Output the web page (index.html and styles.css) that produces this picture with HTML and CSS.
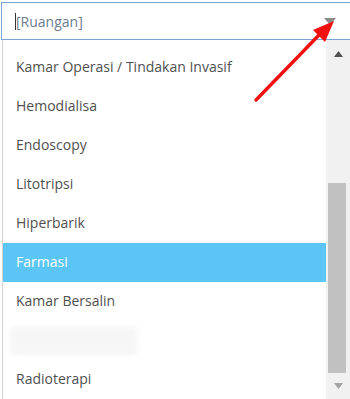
FILE: index.html
```html
<!DOCTYPE html>
<html>
<head>
<meta charset="utf-8">
<link rel="stylesheet" href="styles.css">
</head>
<body>
<div class="page">
  <div class="select">
    <span class="caret"></span><span class="placeholder">[Ruangan]</span>
    <svg class="toggle" width="12" height="8" viewBox="0 0 12 8"><path d="M0 0H12L6 7Z" fill="#8a8a8a"/></svg>
  </div>
  <div class="dropdown">
    <ul class="list">
      <li class="item">Kamar Operasi / Tindakan Invasif</li>
      <li class="item">Hemodialisa</li>
      <li class="item">Endoscopy</li>
      <li class="item">Litotripsi</li>
      <li class="item">Hiperbarik</li>
      <li class="item active">Farmasi</li>
      <li class="item">Kamar Bersalin</li>
      <li class="item"><span class="blur"></span></li>
      <li class="item">Radioterapi</li>
    </ul>
    <div class="scrollbar">
      <svg class="sb-arrow" width="9" height="6" viewBox="0 0 9 6"><path d="M0 6H9L4.5 0Z" fill="#505050"/></svg>
      <div class="thumb"></div>
      <svg class="sb-arrow" width="9" height="6" viewBox="0 0 9 6"><path d="M0 0H9L4.5 6Z" fill="#a3a3a3"/></svg>
    </div>
  </div>
  <svg class="pointer" width="350" height="120" viewBox="0 0 350 120">
    <line x1="256" y1="100" x2="321" y2="33" stroke="#f01010" stroke-width="3.4" stroke-linecap="round"/>
    <path d="M334 21 L313 30 L325 42 Z" fill="#f01010"/>
  </svg>
</div>
</body>
</html>
```

FILE: styles.css
```css
html, body {
  margin: 0;
  padding: 0;
  background: #ffffff;
}
.page {
  position: relative;
  width: 350px;
  height: 399px;
  overflow: hidden;
  font-family: "Open Sans", "Noto Sans", sans-serif;
}
.select {
  box-sizing: border-box;
  margin: 2px -4px 0 1px;
  height: 38px;
  border: 1px solid #7ca2d6;
  display: flex;
  align-items: center;
  padding-left: 13px;
  font-size: 14px;
  color: #6b7d8f;
}
.caret {
  width: 1px;
  height: 17px;
  background: #333;
}
.placeholder {
  flex: 1;
}
.toggle {
  margin-right: 17px;
  margin-top: 1px;
}
.dropdown {
  display: flex;
  height: 359px;
  margin-left: 2px;
  border-left: 1px solid #d4d4d4;
}
.list {
  list-style: none;
  margin: 0;
  padding: 8px 0 0 0;
  flex: 1;
  min-width: 0;
}
.item {
  box-sizing: border-box;
  height: 39px;
  display: flex;
  align-items: center;
  padding: 0 0 3px 13px;
  font-size: 14px;
  color: #505050;
  white-space: nowrap;
}
.item.active {
  background: #5bc6f5;
  color: #fff;
}
.blur {
  display: block;
  width: 127px;
  height: 28px;
  margin: 3px 0 0 -6px;
  background: #f6f6f6;
  border-radius: 3px;
  filter: blur(2px);
}
.scrollbar {
  width: 24px;
  background: #f1f1f1;
  display: flex;
  flex-direction: column;
  align-items: center;
}
.sb-arrow {
  flex: none;
}
.scrollbar .sb-arrow:first-child {
  margin-top: 11px;
}
.thumb {
  width: 18px;
  height: 190px;
  background: #c1c1c1;
  margin: 126px 0 0 -3px;
  flex: none;
}
.scrollbar .sb-arrow:last-child {
  margin-top: 10px;
}
.pointer {
  position: absolute;
  left: 0;
  top: 0;
}
```
